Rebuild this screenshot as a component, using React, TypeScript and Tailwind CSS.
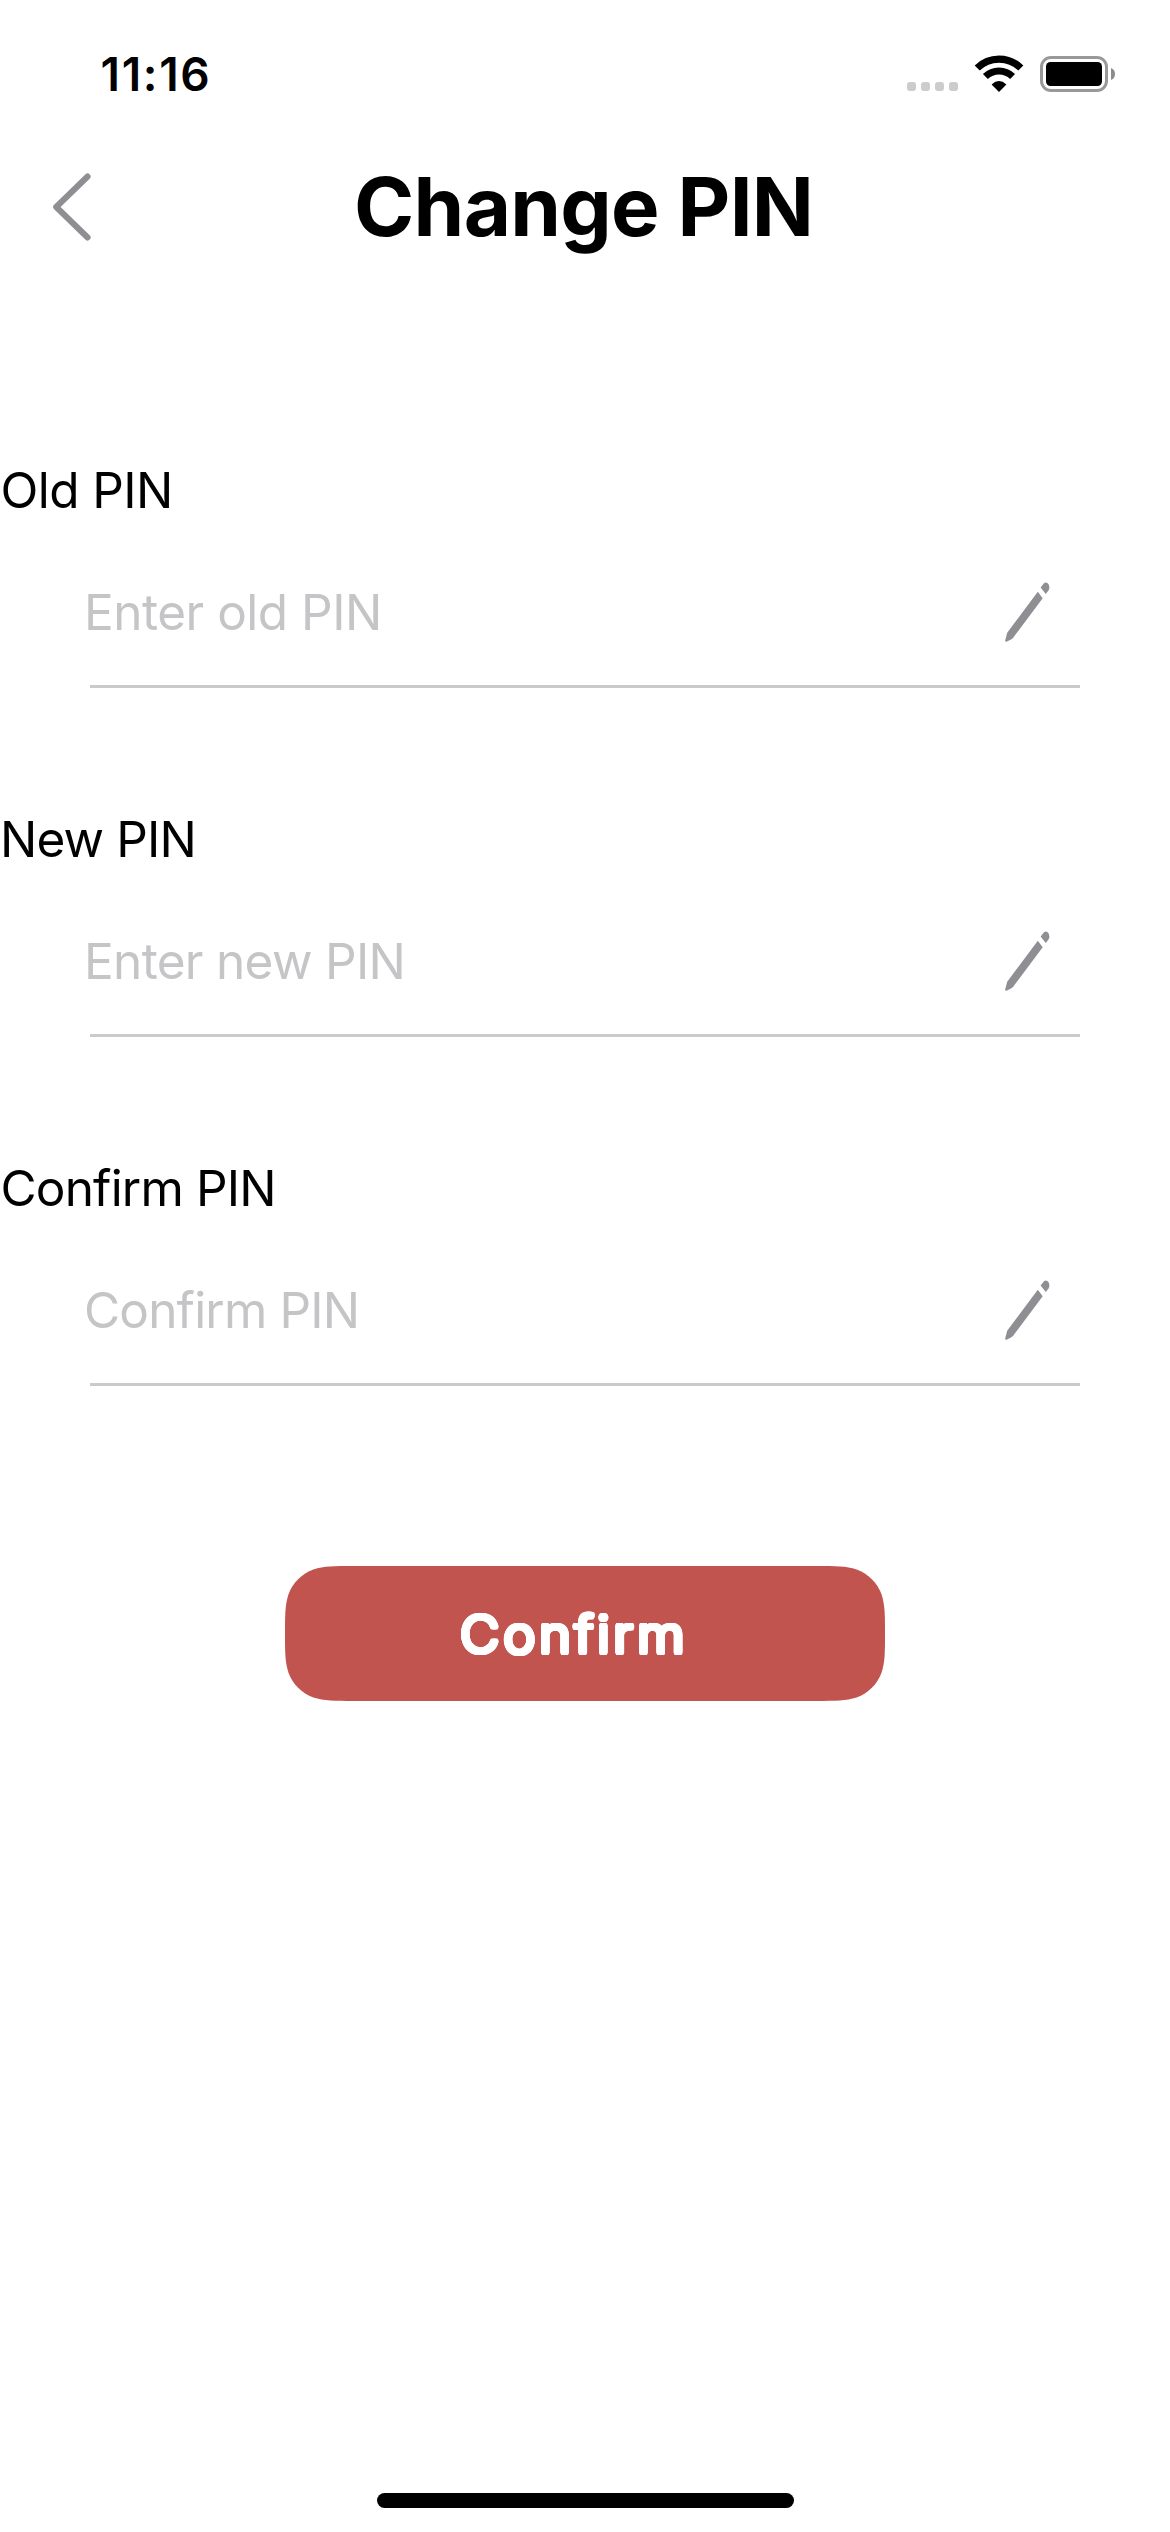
type Field = {
  label: string;
  placeholder: string;
  labelClass: string;
  placeholderClass: string;
};

const fields: Field[] = [
  {
    label: "Old PIN",
    placeholder: "Enter old PIN",
    labelClass: "tracking-[-0.6px] pl-[0.5px]",
    placeholderClass: "placeholder:tracking-[-0.5px]",
  },
  {
    label: "New PIN",
    placeholder: "Enter new PIN",
    labelClass: "tracking-[-0.85px] pl-0",
    placeholderClass: "placeholder:tracking-[-0.68px]",
  },
  {
    label: "Confirm PIN",
    placeholder: "Confirm PIN",
    labelClass: "tracking-[-0.82px] pl-[0.5px]",
    placeholderClass: "placeholder:tracking-[-0.82px]",
  },
];

function WifiIcon() {
  return (
    <svg width="50" height="38" viewBox="0 0 50 38" fill="none" stroke="#000">
      <path d="M3.2 13 A31 31 0 0 1 46.8 13" strokeWidth="7.2" />
      <path d="M11.4 21.6 A19.4 19.4 0 0 1 38.6 21.6" strokeWidth="7" />
      <path d="M25 37 L17.6 29.4 Q25 22.600 32.4 29.4 Z" fill="#000" stroke="none" />
    </svg>
  );
}

function BatteryIcon() {
  return (
    <svg width="76" height="36" viewBox="0 0 76 36">
      <rect x="1.5" y="1.5" width="65" height="33" rx="9.5" fill="none" stroke="#999" strokeWidth="3" />
      <rect x="6" y="6" width="56" height="24" rx="4.5" fill="#000" />
      <path d="M71 12 Q75 13.5 75 18 Q75 22.5 71 24 Z" fill="#8c8c8c" />
    </svg>
  );
}

function StatusBar() {
  return (
    <div className="flex h-[149px] items-center justify-between pl-[100.500px] pr-[54px]">
      <span className="pb-[2px] text-[46px] font-semibold leading-none tracking-[1.7px]">11:16</span>
      <div className="flex h-[38px] items-start">
        <div className="mt-[26px] flex gap-[5px]">
          <i className="size-[9px] rounded-[3px] bg-[#ccc]" />
          <i className="size-[9px] rounded-[3px] bg-[#ccc]" />
          <i className="size-[9px] rounded-[3px] bg-[#ccc]" />
          <i className="size-[9px] rounded-[3px] bg-[#ccc]" />
        </div>
        <div className="-mt-px ml-[16px]">
          <WifiIcon />
        </div>
        <div className="ml-[16px]">
          <BatteryIcon />
        </div>
      </div>
    </div>
  );
}

function PencilIcon() {
  return (
    <svg width="48" height="62" viewBox="0 -9 48 62" fill="#8e8e93">
      <path d="M35.8 1.7 L40.7 8.2 L13 45.3 Q11.7 47.9 9 49.4 L4.5 51.7 Q2.8 51.9 3.3 50 L5.2 42.8 Z" />
      <path d="M38.6 -2.6 L42 -6.8 Q44.7 -8.6 46.8 -5.2 Q48.2 -2 46.5 0.6 L43.8 4.1 Z" />
    </svg>
  );
}

function PinField({ label, placeholder, labelClass, placeholderClass }: Field) {
  return (
    <label className="block pb-[115px]">
      <span className={`block text-[49.5px] leading-[72px] ${labelClass}`}>{label}</span>
      <div className="ml-[84px] mr-[90px] mt-[13px] flex h-[146px] items-center">
        <input
          type="password"
          placeholder={placeholder}
          className={`h-[72px] min-w-0 flex-1 bg-transparent text-[49.5px] leading-[72px] outline-none placeholder:text-[#c5c5c7] placeholder:opacity-100 ${placeholderClass}`}
        />
        <div className="mr-[30px] [&>svg]:overflow-visible">
          <PencilIcon />
        </div>
      </div>
      <div className="mx-[90px] h-[3px] bg-[#cacacb]" />
    </label>
  );
}

export default function App() {
  return (
    <div className="flex h-[2532px] w-[1170px] flex-col bg-white font-['Inter',sans-serif] text-black">
      <StatusBar />
      <header className="flex h-[117px] items-center pl-[50px]">
        <button aria-label="Back" className="w-[304px] pb-[2px]">
          <svg width="44" height="68" viewBox="0 0 44 68" fill="none" stroke="#8e8e93" strokeWidth="6" strokeLinecap="round" strokeLinejoin="round">
            <path d="M37.6 3.5 L6.2 34 L37.6 64.5" />
          </svg>
        </button>
        <h1 className="whitespace-nowrap pb-px text-[81.5px] font-bold leading-none tracking-[-0.7px]">Change PIN</h1>
      </header>
      <main className="mt-[188px]">
        {fields.map((field) => (
          <PinField key={field.label} {...field} />
        ))}
        <button className="ml-[285px] mt-[65px] flex h-[135px] w-[600px] items-center bg-[#c25450] pl-[175px] [clip-path:path('M68.8_0L531.2_0C551_0_560.9_0_571.6_3.4C583.2_7.6_592.4_16.8_596.6_28.4C600_39.1_600_49_600_67.5C600_86_600_95.9_596.6_106.6C592.4_118.2_583.2_127.4_571.6_131.6C560.9_135_551_135_531.2_135L68.8_135C49_135_39.1_135_28.4_131.6C16.8_127.4_7.6_118.2_3.4_106.6C0_95.9_0_86_0_67.5C0_49_0_39.1_3.4_28.4C7.6_16.8_16.8_7.6_28.4_3.4C39.1_0_49_0_68.8_0Z')]">
          <span className="inline-block origin-left scale-x-[1.05] text-[51.7px] font-light leading-[72px] tracking-[3.5px] text-white [text-shadow:2.4px_0_#fff,-2.4px_0_#fff,0_2.4px_#fff,0_-2.4px_#fff,1.7px_1.7px_#fff,-1.7px_1.7px_#fff,1.7px_-1.7px_#fff,-1.7px_-1.7px_#fff,2.2px_0.9px_#fff,2.2px_-0.9px_#fff,-2.2px_0.9px_#fff,-2.2px_-0.9px_#fff,0.9px_2.2px_#fff,0.9px_-2.2px_#fff,-0.9px_2.2px_#fff,-0.9px_-2.2px_#fff,1.2px_0_#fff,-1.2px_0_#fff]">
            Confirm
          </span>
        </button>
      </main>
      <div className="mx-auto mb-[24px] mt-auto h-[15px] w-[417px] rounded-full bg-black" />
    </div>
  );
}
